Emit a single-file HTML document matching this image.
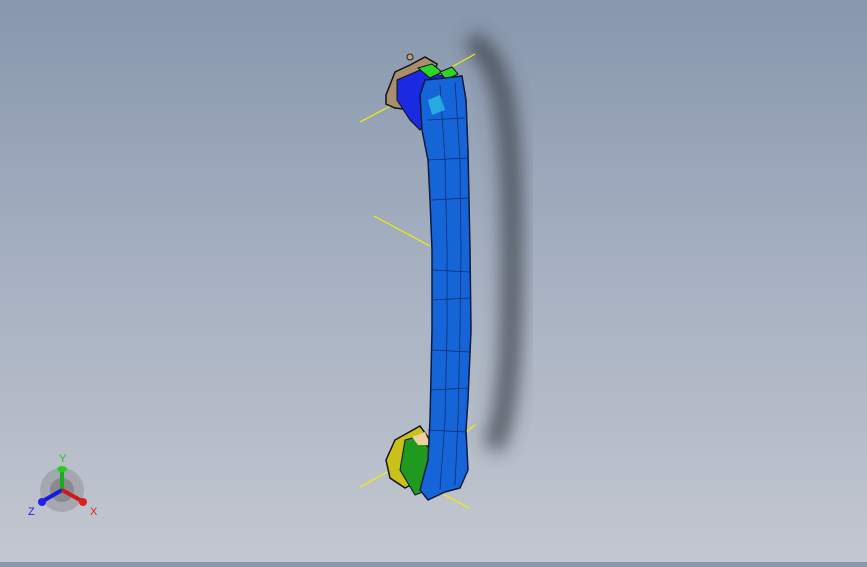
<!DOCTYPE html>
<html><head><style>
html,body{margin:0;padding:0}
body{width:867px;height:562px;overflow:hidden;background:linear-gradient(#8897ad 0%,#a4afc0 45%,#c3c7d0 100%);font-family:"Liberation Sans",sans-serif}
</style></head><body>
<svg width="867" height="562" viewBox="0 0 867 562" xmlns="http://www.w3.org/2000/svg">
<defs>
<filter id="b" x="-50%" y="-50%" width="200%" height="200%"><feGaussianBlur stdDeviation="9"/></filter>
</defs>
<path d="M470 40 C505 60 512 120 512 250 C512 350 508 420 492 448" stroke="#3a3f48" stroke-width="20" fill="none" filter="url(#b)" opacity="0.8"/>
<g stroke="#f2f000" stroke-width="1.2">
<line x1="360" y1="122" x2="402" y2="100"/>
<line x1="450" y1="68" x2="475" y2="54"/>
<line x1="432" y1="102" x2="468" y2="123"/>
<line x1="374" y1="216" x2="430" y2="246"/>
<line x1="360" y1="487" x2="400" y2="465"/>
<line x1="465" y1="433" x2="475" y2="425"/>
<line x1="432" y1="488" x2="469" y2="508"/>
</g>
<path d="M386 95 L395 72 L410 65 L425 57 L437 64 L430 90 L412 110 L395 108 L386 104Z" fill="#a88e6e" stroke="#111" stroke-width="1.5"/>
<circle cx="410" cy="57" r="3" fill="#c8a070" stroke="#222"/>
<path d="M397 80 L420 70 L450 78 L440 105 L420 130 L410 120 L397 100Z" fill="#1a2ae0" stroke="#111" stroke-width="1"/>
<path d="M418 68 L432 64 L442 72 L430 78Z" fill="#2bd62b" stroke="#111"/>
<path d="M440 72 L452 67 L458 74 L446 80Z" fill="#2bd62b" stroke="#111"/>
<path d="M386 460 L395 440 L420 426 L430 440 L420 480 L405 488 L390 478Z" fill="#c9c01a" stroke="#111" stroke-width="1.5"/>
<path d="M405 440 L420 436 L430 450 L428 490 L415 495 L400 470Z" fill="#1f9a1f" stroke="#111" stroke-width="1"/>
<path d="M412 437 L425 432 L430 445 L418 445Z" fill="#f0d0a0"/>
<path d="M420 95 L425 80 L445 78 L462 76 L466 100 L468 150 L470 250 L471 330 L468 400 L466 430 L468 470 L460 488 L445 492 L428 500 L420 490 L428 460 L430 420 L432 330 L432 250 L430 200 L428 160 L422 130 Z" fill="#1565d8" stroke="#0a1a40" stroke-width="1.5"/>
<g stroke="#0a1f50" stroke-width="0.8" fill="none" opacity="0.8">
<path d="M440 85 L445 160 L447 250 L447 330 L445 420 L440 490"/>
<path d="M455 82 L460 160 L461 250 L460 330 L458 420 L455 485"/>
<path d="M432 200 L468 198 M432 270 L470 272 M432 300 L470 298 M432 350 L470 352 M430 390 L469 388 M428 430 L466 432 M428 120 L465 118 M428 160 L468 158"/>
</g>
<path d="M428 100 L440 95 L445 110 L432 115Z" fill="#30c8e8" opacity="0.7"/>
<g transform="translate(62,490)">
<circle r="22" fill="#777" opacity="0.35"/>
<circle r="12" fill="#555" opacity="0.35"/>
<line x1="0" y1="0" x2="0" y2="-20" stroke="#18b018" stroke-width="4"/>
<ellipse cx="0" cy="-21" rx="5" ry="3" fill="#22d022"/>
<line x1="0" y1="0" x2="-19" y2="11" stroke="#1818e0" stroke-width="4"/>
<circle cx="-20" cy="12" r="4" fill="#2020f0"/>
<line x1="0" y1="0" x2="20" y2="11" stroke="#d01818" stroke-width="4"/>
<circle cx="21" cy="12" r="4" fill="#e02020"/>
<text x="-3" y="-28" font-size="11" fill="#20c020" font-family="Liberation Sans">Y</text>
<text x="-34" y="25" font-size="11" fill="#2020e0" font-family="Liberation Sans">Z</text>
<text x="28" y="25" font-size="11" fill="#e02020" font-family="Liberation Sans">X</text>
</g>
</svg>
</body></html>
